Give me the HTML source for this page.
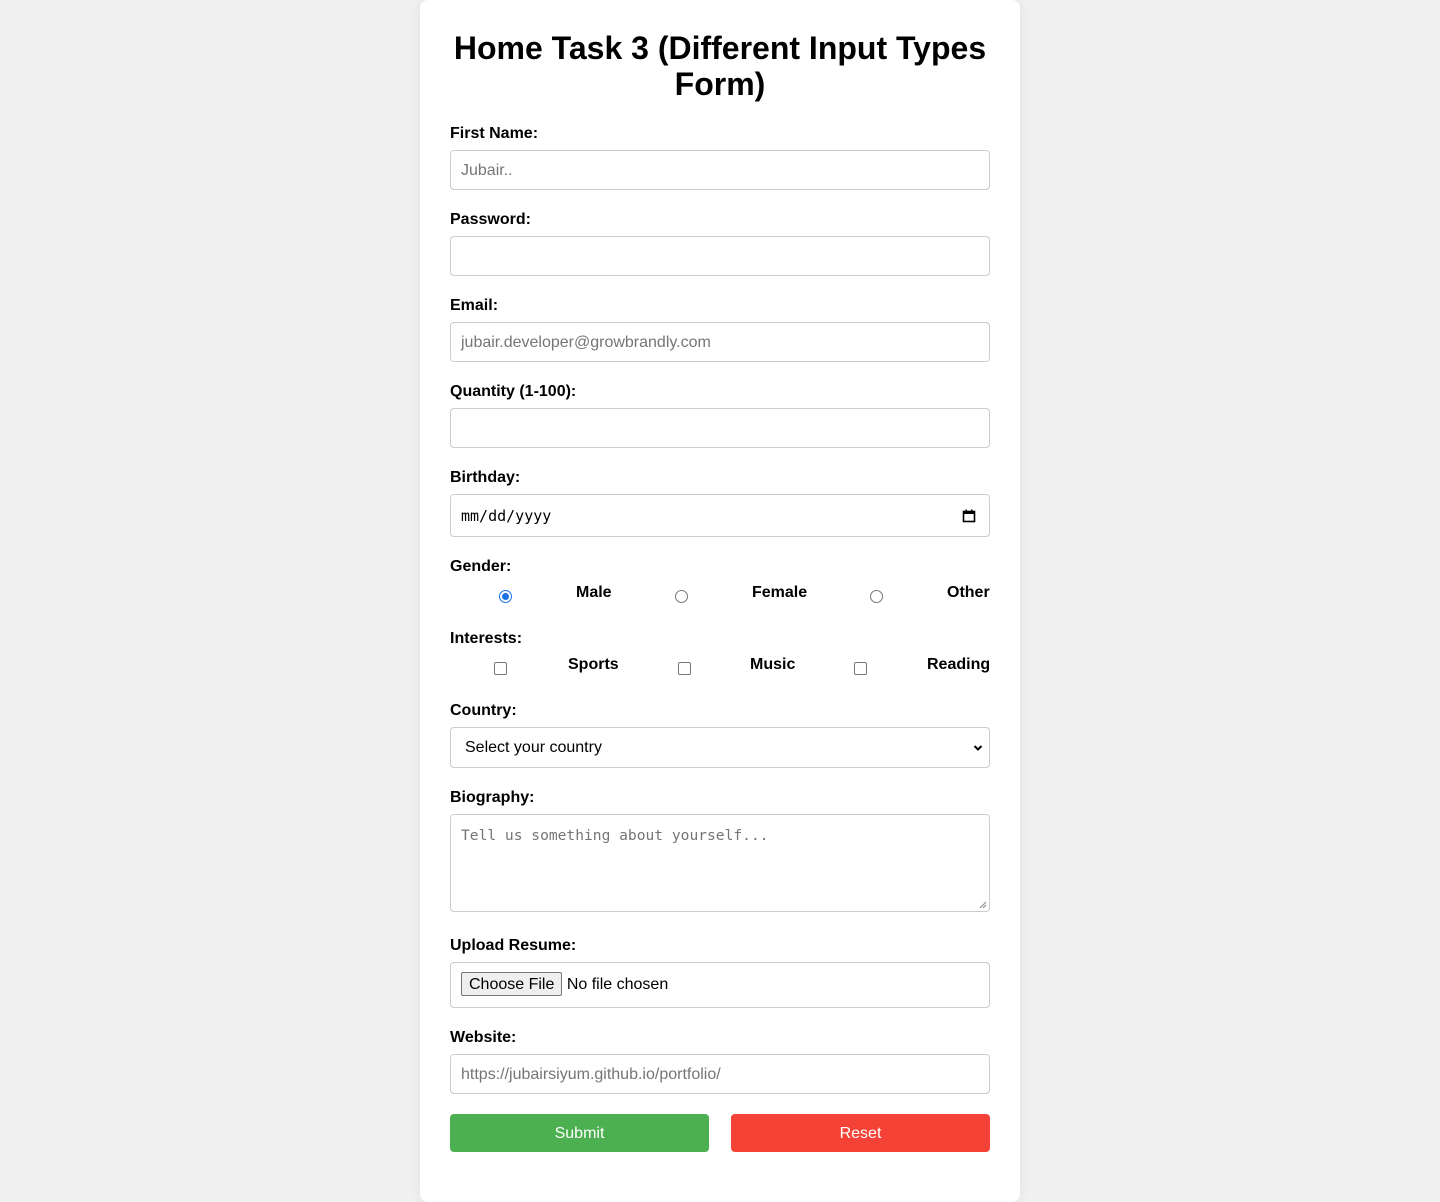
<!DOCTYPE html>
<html><head><meta charset="utf-8"><style>
*{box-sizing:border-box;margin:0;padding:0}
body{width:1440px;height:1202px;background:#f0f0f0;font-family:"Liberation Sans",Arial,sans-serif;position:relative;overflow:hidden}
.card{position:absolute;left:420px;top:0;width:600px;height:1202px;background:#fff;border-radius:8px;box-shadow:0 0 10px rgba(0,0,0,0.08)}
h1{position:absolute;left:420px;width:600px;top:30px;text-align:center;font-size:32px;line-height:36px;font-weight:bold;color:#000}
.lbl{position:absolute;left:450px;font-size:16px;font-weight:bold;color:#000;line-height:18px;margin-top:2px}
.in{position:absolute;left:450px;width:540px;height:40px;border:1px solid #ccc;border-radius:4px;background:#fff;font-size:16px;color:#757575;padding-left:10px;line-height:39px}
.opt{position:absolute;font-size:16px;font-weight:bold;line-height:18px;margin-top:2px}
.radio{position:absolute;width:13px;height:13px;border:1px solid #767676;border-radius:50%;background:#fff}
.radio.on{border:1px solid #1a73e8}
.radio.on::after{content:"";position:absolute;left:2px;top:2px;width:7px;height:7px;border-radius:50%;background:#1a73e8}
.cb{position:absolute;width:13px;height:13px;border:1px solid #767676;border-radius:2px;background:#fff}
.btn{position:absolute;top:1114px;height:38px;width:259px;border-radius:4px;color:#fff;font-size:16px;text-align:center;line-height:39px}
</style></head><body>
<div class="card"></div>
<h1>Home Task 3 (Different Input Types<br>Form)</h1>

<div class="lbl" style="top:123px">First Name:</div>
<div class="in" style="top:150px">Jubair..</div>

<div class="lbl" style="top:209px">Password:</div>
<div class="in" style="top:236px"></div>

<div class="lbl" style="top:295px">Email:</div>
<div class="in" style="top:322px">jubair.developer@growbrandly.com</div>

<div class="lbl" style="top:381px">Quantity (1-100):</div>
<div class="in" style="top:408px"></div>

<div class="lbl" style="top:467px">Birthday:</div>
<div class="in" style="top:494px;height:43px;line-height:43px;color:#000;font-family:'DejaVu Sans Mono','Liberation Mono',monospace;font-size:15px">mm/dd/yyyy
<svg style="position:absolute;left:511px;top:14px" width="14" height="14" viewBox="0 0 14 14"><rect x="1.5" y="2.5" width="11" height="10" fill="none" stroke="#000" stroke-width="1.6"/><rect x="1.5" y="2.5" width="11" height="2.5" fill="#000"/><rect x="3.5" y="0.5" width="1.5" height="3" fill="#000"/><rect x="9" y="0.5" width="1.5" height="3" fill="#000"/></svg></div>

<div class="lbl" style="top:556px">Gender:</div>
<div class="radio on" style="left:499px;top:590px"></div>
<div class="opt" style="left:576px;top:582px">Male</div>
<div class="radio" style="left:675px;top:590px"></div>
<div class="opt" style="left:752px;top:582px">Female</div>
<div class="radio" style="left:870px;top:590px"></div>
<div class="opt" style="left:947px;top:582px">Other</div>

<div class="lbl" style="top:628px">Interests:</div>
<div class="cb" style="left:494px;top:662px"></div>
<div class="opt" style="left:568px;top:654px">Sports</div>
<div class="cb" style="left:678px;top:662px"></div>
<div class="opt" style="left:750px;top:654px">Music</div>
<div class="cb" style="left:854px;top:662px"></div>
<div class="opt" style="left:927px;top:654px">Reading</div>

<div class="lbl" style="top:700px">Country:</div>
<div class="in" style="top:727px;height:41px;color:#000;padding-left:14px;line-height:40px">Select your country
<svg style="position:absolute;left:522px;top:16px" width="10" height="8" viewBox="0 0 10 8"><path d="M1.5 2 L5 5.5 L8.5 2" fill="none" stroke="#000" stroke-width="2"/></svg></div>

<div class="lbl" style="top:787px">Biography:</div>
<div class="in" style="top:814px;height:98px;line-height:20px;padding-top:11px;font-family:'DejaVu Sans Mono','Liberation Mono',monospace;font-size:14.6px;color:#757575">Tell us something about yourself...
<svg style="position:absolute;right:2px;bottom:2px" width="8" height="8" viewBox="0 0 8 8"><path d="M7 1 L1 7 M7 4 L4 7" stroke="#888" stroke-width="1"/></svg></div>

<div class="lbl" style="top:935px">Upload Resume:</div>
<div class="in" style="top:962px;height:46px;color:#000;padding-left:10px;line-height:44px"><span style="display:inline-block;height:24px;line-height:23px;border:1px solid #767676;border-radius:2px;background:#efefef;padding:0 7px;vertical-align:middle;margin-top:-1px">Choose File</span> No file chosen</div>

<div class="lbl" style="top:1027px">Website:</div>
<div class="in" style="top:1054px">https://jubairsiyum.github.io/portfolio/</div>

<div class="btn" style="left:450px;background:#4caf50">Submit</div>
<div class="btn" style="left:731px;background:#f44336">Reset</div>
</body></html>
